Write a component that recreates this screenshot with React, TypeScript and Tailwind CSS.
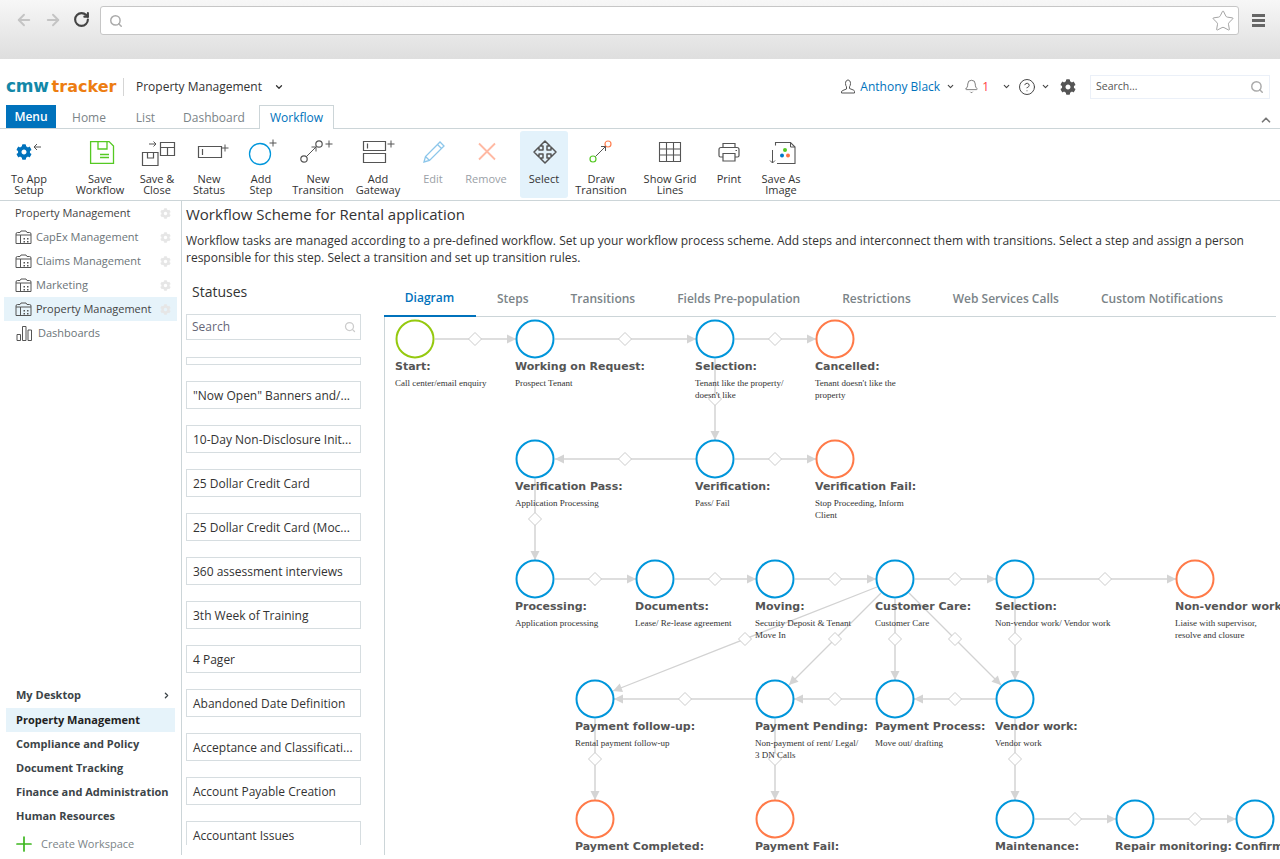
import React from "react";
import { ArrowLeft, ArrowRight, RotateCw, Search, Star, ChevronDown, ChevronRight, ChevronUp, Bell, CircleHelp, Plus } from "lucide-react";
import { FaCog } from "react-icons/fa";

const G = "#555";

function PlusMark({ x, y }: { x: number; y: number }) {
  return <path d={`M${x - 3.5} ${y}h7M${x} ${y - 3.5}v7`} stroke="#555" fill="none" strokeWidth="1" />;
}

function Ico({ children }: { children: React.ReactNode }) {
  return (
    <svg width="48" height="32" viewBox="0 0 48 32" fill="none" stroke={G} strokeWidth="1.2" className="shrink-0">
      {children}
    </svg>
  );
}

const icons: Record<string, React.ReactNode> = {
  setup: (
    <>
      <path d="M29 11h7M32 8l-3 3 3 3" strokeWidth="1" />
    </>
  ),
  save: (
    <g stroke="#55c923" strokeWidth="1.3">
      <path d="M14.6 5.6h18.5l4.4 4.4v17.4H14.6z" />
      <path d="M22 5.6v7.4h9V5.6M24 18.5h9M24 21.5h9" />
    </g>
  ),
  saveclose: (
    <>
      <path d="M9.5 16.5H25v13H9.5z" />
      <path d="M14.5 16.500v5.500h6v-5.500" />
      <path d="M16 8h7M20.500 5.500l2.500 2.500-2.500 2.500" strokeWidth="1" />
      <path d="M27.500 6.500h14v13h-14zM27.500 11.500h14M34.500 11.500v8" />
    </>
  ),
  status: (
    <>
      <path d="M13.500 10.500h23v11h-23zM17.500 13v6" />
      <PlusMark x={40} y={12} />
    </>
  ),
  step: (
    <>
      <circle cx="23" cy="18" r="10.500" stroke="#0096db" strokeWidth="1.300" />
      <PlusMark x={36} y={7} />
    </>
  ),
  transition: (
    <>
      <circle cx="10" cy="23" r="3.200" />
      <circle cx="25" cy="8" r="3.200" />
      <path d="M12.500 20.500l9.500-9.500M17.500 11h4.500v4.500" strokeWidth="1" />
      <PlusMark x={35} y={8} />
    </>
  ),
  gateway: (
    <>
      <path d="M9.500 5.500h22v9h-22zM9.500 17.500h22v9h-22zM13.500 7.500v5" />
      <PlusMark x={37} y={8} />
    </>
  ),
  edit: (
    <g stroke="#8cc6ea" strokeWidth="1.300">
      <path d="M15 26l1.500-5.500L31 6l4 4-14.500 14.500zM16.500 20.500l4 4M28.500 8.500l4 4" />
    </g>
  ),
  remove: (
    <path d="M17 7.500l16 16M33 7.500l-16 16" stroke="#ffb9a3" strokeWidth="1.800" />
  ),
  select: (
    <path d="M25 5l5 5h-3v4h4v-3l5 5-5 5v-3h-4v4h3l-5 5-5-5h3v-4h-4v3l-5-5 5-5v3h4v-4h-3z" strokeWidth="1.500" strokeLinejoin="round" />
  ),
  draw: (
    <>
      <circle cx="16" cy="23" r="3" stroke="#55c923" />
      <circle cx="31" cy="8" r="3" stroke="#ff7f50" />
      <path d="M18.500 20.500l10-10M24 10.500h4.500V15" strokeWidth="1" />
    </>
  ),
  grid: (
    <path d="M13.500 6.500h21v19h-21zM13.500 13h21M13.500 19h21M20.500 6.500v19M27.500 6.500v19" strokeWidth="1.100" />
  ),
  print: (
    <>
      <path d="M18 12V7.500h12V12M18 21h-2.500a1.500 1.500 0 0 1-1.500-1.500v-6a2 2 0 0 1 2-2h16a2 2 0 0 1 2 2v6a1.500 1.500 0 0 1-1.500 1.500H30" />
      <path d="M18 17.500h12v7.500H18z" />
      <path d="M30.500 14.500h1.500" />
    </>
  ),
  image: (
    <>
      <path d="M18.500 9.500V6.500h15l4.500 4.500v16.500H20" strokeWidth="1.100" />
      <path d="M33.500 6.500v4.500h4.500" strokeWidth="1" />
      <path d="M15.500 14v13M13 24.500l2.500 2.500 2.500-2.500" strokeWidth="1" />
      <circle cx="28" cy="14" r="2" fill="#55c923" stroke="none" />
      <circle cx="25" cy="19.500" r="2" fill="#0078c8" stroke="none" />
      <circle cx="31" cy="19.500" r="2" fill="#ff7043" stroke="none" />
    </>
  ),
};

const tools = [
  { k: "setup", t: ["To App", "Setup"], c: "w-[46px] ml-[6px]" },
  { k: "save", t: ["Save", "Workflow"], c: "w-[52px] ml-[22px]" },
  { k: "saveclose", t: ["Save &", "Close"], c: "w-[42px] ml-[10px]" },
  { k: "status", t: ["New", "Status"], c: "w-[38px] ml-[12px]" },
  { k: "step", t: ["Add", "Step"], c: "w-[42px] ml-[12px]" },
  { k: "transition", t: ["New", "Transition"], c: "w-[56px] ml-[8px]" },
  { k: "gateway", t: ["Add", "Gateway"], c: "w-[48px] ml-[8px]" },
  { k: "edit", t: ["Edit"], c: "w-[34px] ml-[14px] text-[#9aa0a6]" },
  { k: "remove", t: ["Remove"], c: "w-[48px] ml-[12px] text-[#9aa0a6]" },
  { k: "select", t: ["Select"], c: "w-[48px] ml-[10px] bg-[#e3f2fb] rounded-[3px]" },
  { k: "draw", t: ["Draw", "Transition"], c: "w-[54px] ml-[6px]" },
  { k: "grid", t: ["Show Grid", "Lines"], c: "w-[60px] ml-[12px]" },
  { k: "print", t: ["Print"], c: "w-[34px] ml-[12px]" },
  { k: "image", t: ["Save As", "Image"], c: "w-[46px] ml-[12px]" },
];

function WorkspaceIcon() {
  return (
    <svg width="17" height="15" viewBox="0 0 17 15" fill="none" stroke="#555" strokeWidth="1" className="shrink-0">
      <path d="M1 13.500V4a1.500 1.500 0 0 1 1.500-1.500H5L6 1h5l1 1.500h2.500A1.500 1.500 0 0 1 16 4v9.500z" />
      <path d="M1 5h4.500v8.500M5.500 5h10.500" />
      <path d="M8.500 8h1.500v1.500H8.500zM12 8h1.500v1.500H12zM8.500 11h1.500v1.500H8.500zM12 11h1.500v1.500H12z" fill="#555" stroke="none" />
    </svg>
  );
}

function GearLite() {
  return <FaCog className="text-[#e6e6e6] text-[11px] shrink-0" />;
}

const statuses = [
  '"Now Open" Banners and/...',
  "10-Day Non-Disclosure Init...",
  "25 Dollar Credit Card",
  "25 Dollar Credit Card (Moc...",
  "360 assessment interviews",
  "3th Week of Training",
  "4 Pager",
  "Abandoned Date Definition",
  "Acceptance and Classificati...",
  "Account Payable Creation",
  "Accountant Issues",
];

const tabs = ["Diagram", "Steps", "Transitions", "Fields Pre-population", "Restrictions", "Web Services Calls", "Custom Notifications"];

type N = { x: number; y: number; c: "b" | "g" | "o"; t: string; d?: string[] };
const nodes: N[] = [
  { x: 415, y: 339, c: "g", t: "Start:", d: ["Call center/email enquiry"] },
  { x: 535, y: 339, c: "b", t: "Working on Request:", d: ["Prospect Tenant"] },
  { x: 715, y: 339, c: "b", t: "Selection:", d: ["Tenant like the property/", "doesn't like"] },
  { x: 835, y: 339, c: "o", t: "Cancelled:", d: ["Tenant doesn't like the", "property"] },
  { x: 535, y: 459, c: "b", t: "Verification Pass:", d: ["Application Processing"] },
  { x: 715, y: 459, c: "b", t: "Verification:", d: ["Pass/ Fail"] },
  { x: 835, y: 459, c: "o", t: "Verification Fail:", d: ["Stop Proceeding, Inform", "Client"] },
  { x: 535, y: 579, c: "b", t: "Processing:", d: ["Application processing"] },
  { x: 655, y: 579, c: "b", t: "Documents:", d: ["Lease/ Re-lease agreement"] },
  { x: 775, y: 579, c: "b", t: "Moving:", d: ["Security Deposit & Tenant", "Move In"] },
  { x: 895, y: 579, c: "b", t: "Customer Care:", d: ["Customer Care"] },
  { x: 1015, y: 579, c: "b", t: "Selection:", d: ["Non-vendor work/ Vendor work"] },
  { x: 1195, y: 579, c: "o", t: "Non-vendor work:", d: ["Liaise with supervisor,", "resolve and closure"] },
  { x: 595, y: 699, c: "b", t: "Payment follow-up:", d: ["Rental payment follow-up"] },
  { x: 775, y: 699, c: "b", t: "Payment Pending:", d: ["Non-payment of rent/ Legal/", "3 DN Calls"] },
  { x: 895, y: 699, c: "b", t: "Payment Process:", d: ["Move out/ drafting"] },
  { x: 1015, y: 699, c: "b", t: "Vendor work:", d: ["Vendor work"] },
  { x: 595, y: 819, c: "o", t: "Payment Completed:" },
  { x: 775, y: 819, c: "o", t: "Payment Fail:" },
  { x: 1015, y: 819, c: "b", t: "Maintenance:" },
  { x: 1135, y: 819, c: "b", t: "Repair monitoring:" },
  { x: 1255, y: 819, c: "b", t: "Confirmation:" },
];

// from, to, diamond; thin = slanted edges
const edges: [number, number, number, number, number, number, number?][] = [
  [435, 339, 516, 339, 475, 339],
  [555, 339, 696, 339, 625, 339],
  [735, 339, 816, 339, 775, 339],
  [715, 359, 715, 440, 715, 399],
  [696, 459, 555, 459, 625, 459],
  [735, 459, 816, 459, 775, 459],
  [535, 479, 535, 560, 535, 519],
  [555, 579, 636, 579, 595, 579],
  [675, 579, 756, 579, 715, 579],
  [795, 579, 876, 579, 835, 579],
  [915, 579, 996, 579, 955, 579],
  [1035, 579, 1176, 579, 1105, 579],
  [877, 587, 613, 691, 745, 639, 1],
  [881, 593, 789, 685, 835, 639, 1],
  [895, 599, 895, 680, 895, 639],
  [909, 593, 1001, 685, 955, 639, 1],
  [1015, 599, 1015, 680, 1015, 639],
  [876, 699, 794, 699, 835, 699],
  [756, 699, 614, 699, 685, 699],
  [996, 699, 914, 699, 955, 699],
  [595, 719, 595, 800, 595, 759],
  [775, 719, 775, 800, 775, 759],
  [1015, 719, 1015, 800, 1015, 759],
  [1035, 819, 1116, 819, 1075, 819],
  [1155, 819, 1236, 819, 1195, 819],
];

function Edge({ e }: { e: (typeof edges)[number] }) {
  const [x1, y1, x2, y2, dx, dy, thin] = e;
  const a = (Math.atan2(y2 - y1, x2 - x1) * 180) / Math.PI;
  return (
    <g>
      <line x1={x1} y1={y1} x2={x2} y2={y2} stroke={thin ? "#d2d2d2" : "#dedede"} strokeWidth={thin ? 1.3 : 2} />
      <path d="M0 0l-9-4.500v9z" fill="#d4d4d4" transform={`translate(${x2} ${y2}) rotate(${a})`} />
      <path d={`M${dx} ${dy - 6.500}l6.500 6.500-6.500 6.500-6.500-6.500z`} fill="#fff" stroke="#cccccc" strokeWidth="1" strokeLinejoin="round" />
    </g>
  );
}

const stroke = { b: "#0096db", g: "#95c90f", o: "#ff7a48" };

function Diagram() {
  return (
    <div className="relative flex-1 overflow-hidden border-l border-[#ccd5d8]">
      <svg width="895" height="538" viewBox="385 317 895 538" className="block">
        {edges.map((e, i) => (
          <Edge key={i} e={e} />
        ))}
        {nodes.map((n, i) => (
          <circle key={i} cx={n.x} cy={n.y} r="18.500" fill="#fff" stroke={stroke[n.c]} strokeWidth="2" />
        ))}
      </svg>
      {nodes.map((n, i) => (
        <div key={i} className="absolute" style={{ left: n.x - 20 - 385, top: n.y + 21 - 317 }}>
          <div className="font-['DejaVu_Sans'] font-bold text-[11px] leading-[14px] text-[#555] whitespace-nowrap">{n.t}</div>
          {n.d && (
            <div className="mt-[3px] font-['Liberation_Serif'] text-[9px] leading-[12px] text-[#333] whitespace-nowrap">
              {n.d.map((l) => (
                <div key={l}>{l}</div>
              ))}
            </div>
          )}
        </div>
      ))}
    </div>
  );
}

export default function App() {
  return (
    <div className="w-[1280px] h-[859px] overflow-hidden bg-white font-['Open_Sans'] text-[#333]">
      {/* browser bar */}
      <div className="h-[59px] bg-gradient-to-b from-[#f7f7f7] to-[#dedede] flex items-start pt-[6px] pl-[15px]">
        <ArrowLeft size={18} strokeWidth={2.500} className="text-[#c4c4c4] mt-[5px] shrink-0" />
        <ArrowRight size={18} strokeWidth={2.500} className="text-[#c4c4c4] mt-[5px] ml-[11px] shrink-0" />
        <RotateCw size={17} strokeWidth={3} className="text-[#444] mt-[5px] ml-[11px] shrink-0" />
        <div className="ml-[10px] w-[1139px] shrink-0 h-[29px] bg-white border border-[#c6c6c6] rounded-[3px] flex items-center justify-between pl-[8px] pr-[3px]">
          <Search size={14} strokeWidth={2.500} className="text-[#aaa]" />
          <Star size={24} strokeWidth={0.900} className="text-[#999]" />
        </div>
        <div className="ml-[13px] mt-[8px] w-[13px] shrink-0 flex flex-col gap-[2px]">
          <div className="h-[3px] bg-[#666]" />
          <div className="h-[3px] bg-[#666]" />
          <div className="h-[3px] bg-[#666]" />
        </div>
      </div>

      {/* app header */}
      <div className="h-[46px] flex items-center pl-[6px] pr-[10px] pt-[9px]">
        <div className="font-['DejaVu_Sans'] font-bold leading-none flex items-baseline gap-[3px] w-[111px] whitespace-nowrap">
          <span className="text-[#1288a8] text-[17px] tracking-[-0.300px]">cmw</span>
          <span className="text-[#ed7d12] text-[16px]">tracker</span>
        </div>
        <div className="ml-[6px] h-[18px] w-px bg-[#d5d5d5]" />
        <div className="ml-[12px] text-[12px]">Property Management</div>
        <ChevronDown size={10} strokeWidth={3} className="ml-[12px] text-[#333]" />
        <div className="flex-1" />
        <svg width="14" height="15" viewBox="0 0 14 15" fill="none" stroke="#555" strokeWidth="1">
          <path d="M4.500 4.500C4.500 2.500 5.500 1 7 1s2.500 1.500 2.500 3.500c0 1.500-.5 2.500-1 3.300v1.700l3.800 1.500c.8.300 1.200.8 1.200 1.500v1.500H.5V13c0-.7.400-1.200 1.200-1.500l3.800-1.500V7.800c-.5-.8-1-1.800-1-3.300z" />
        </svg>
        <span className="ml-[5px] text-[12px] text-[#0072bc]">Anthony Black</span>
        <ChevronDown size={9} strokeWidth={3} className="ml-[6px] text-[#444]" />
        <Bell size={15} strokeWidth={1.200} className="ml-[9px] text-[#555]" />
        <span className="ml-[3px] text-[12px] text-[#f44]">1</span>
        <ChevronDown size={9} strokeWidth={3} className="ml-[13px] text-[#444]" />
        <CircleHelp size={18} strokeWidth={1.300} className="ml-[7px] text-[#444]" />
        <ChevronDown size={9} strokeWidth={3} className="ml-[5px] text-[#444]" />
        <FaCog className="ml-[10px] text-[16px] text-[#555]" />
        <div className="ml-[14px] w-[180px] h-[24px] border border-[#ebf0f8] flex items-center justify-between px-[5px] text-[10.500px] text-[#555]">
          <span>Search...</span>
          <Search size={14} strokeWidth={2.500} className="text-[#aaa]" />
        </div>
      </div>

      {/* tabs */}
      <div className="h-[24px] flex items-end pl-[6px] border-b border-[#ccd5d8] relative text-[12px]">
        <div className="w-[50px] h-[23px] bg-[#0072bc] text-white font-semibold flex items-center justify-center">Menu</div>
        <div className="w-[66px] h-[23px] pt-[2px] text-[#7b8488] flex items-center justify-center">Home</div>
        <div className="w-[47px] h-[23px] pt-[2px] text-[#7b8488] flex items-center justify-center">List</div>
        <div className="w-[90px] h-[23px] pt-[2px] text-[#7b8488] flex items-center justify-center">Dashboard</div>
        <div className="w-[75px] h-[24px] -mb-px pt-[1px] bg-white border border-b-0 border-[#ccd5d8] text-[#0072bc] flex items-center justify-center">Workflow</div>
        <ChevronUp size={14} strokeWidth={3} className="absolute right-[7px] bottom-[1px] text-[#777]" />
      </div>

      {/* toolbar */}
      <div className="h-[72px] flex items-stretch border-b border-[#ccd5d8] pt-[2px] pb-[2px] text-[11px] leading-[11px] text-[#333]">
        {tools.map((t) => (
          <div key={t.k} className={`${t.c} shrink-0 flex flex-col items-center pt-[5px]`}>
            <div className="relative flex justify-center h-[32px] w-[48px] shrink-0">
              {t.k === "setup" && <FaCog className="absolute left-[11px] top-[8px] text-[16px] text-[#0072bc]" />}
              <Ico>{icons[t.k]}</Ico>
            </div>
            <div className="mt-[5px] text-center whitespace-nowrap">
              {t.t.map((l) => (
                <div key={l}>{l}</div>
              ))}
            </div>
          </div>
        ))}
      </div>

      {/* main */}
      <div className="h-[654px] flex">
        {/* sidebar */}
        <div className="w-[182px] shrink-0 border-r border-[#ccd5d8] flex flex-col justify-between text-[11px]">
          <div>
            <div className="h-[24px] mx-[4px] pl-[11px] pr-[6px] flex items-center justify-between text-[#444]">
              <span>Property Management</span>
              <GearLite />
            </div>
            {["CapEx Management", "Claims Management", "Marketing", "Property Management"].map((s, i) => (
              <div key={s} className={i === 3 ? "h-[24px] mx-[4px] w-[173px] pl-[11px] pr-[6px] flex items-center bg-[#e6f3fa] text-[#444]" : "h-[24px] mx-[4px] w-[173px] pl-[11px] pr-[6px] flex items-center text-[#6b7478]"}>
                <WorkspaceIcon />
                <span className="ml-[4px] flex-1">{s}</span>
                <GearLite />
              </div>
            ))}
            <div className="h-[24px] mx-[4px] pl-[12px] flex items-center text-[#6b7478]">
              <svg width="16" height="16" viewBox="0 0 16 16" fill="none" stroke="#555" strokeWidth="1">
                <path d="M1 9.500h3.500v6H1zM6.500 1.500H10v14H6.500zM12 5h3.500v10.500H12z" />
              </svg>
              <span className="ml-[6px]">Dashboards</span>
            </div>
          </div>
          <div className="font-bold text-[#3c4448]">
            <div className="h-[24px] mx-[6px] pl-[10px] pr-[4px] flex items-center justify-between">
              <span>My Desktop</span>
              <ChevronRight size={9} strokeWidth={3.500} />
            </div>
            <div className="h-[24px] mx-[6px] pl-[10px] flex items-center bg-[#e6f3fa] text-[#222] mt-px">Property Management</div>
            <div className="h-[24px] mx-[6px] pl-[10px] flex items-center">Compliance and Policy</div>
            <div className="h-[24px] mx-[6px] pl-[10px] flex items-center">Document Tracking</div>
            <div className="h-[24px] mx-[6px] pl-[10px] flex items-center whitespace-nowrap">Finance and Administration</div>
            <div className="h-[24px] mx-[6px] pl-[10px] flex items-center">Human Resources</div>
            <div className="h-[27px] mx-[6px] pl-[10px] pt-[5px] flex items-center font-normal text-[#7b8488]">
              <Plus size={24} strokeWidth={1.700} className="text-[#3cb61e] -ml-[4px] shrink-0" />
              <span className="ml-[5px]">Create Workspace</span>
            </div>
          </div>
        </div>

        {/* content */}
        <div className="flex-1 min-w-0 pl-[4px] flex flex-col">
          <h1 className="mt-[3px] text-[15px] leading-[20px] text-[#333] font-normal">Workflow Scheme for Rental application</h1>
          <p className="mt-[8px] text-[12px] leading-[17px] w-[1080px] text-[#333]">
            Workflow tasks are managed according to a pre-defined workflow. Set up your workflow process scheme. Add steps and interconnect them with transitions. Select a step and assign a person responsible for this step. Select a transition and set up transition rules.
          </p>
          <div className="mt-[5px] flex flex-1 min-h-0">
            <div className="w-[198px] shrink-0 flex flex-col min-h-0">
              <div className="pl-[6px] pt-[11px] h-[43px] text-[14px] leading-[20px] text-[#333]">Statuses</div>
              <div className="w-[175px] h-[26px] border border-[#d6dde0] flex items-center justify-between pl-[5px] pr-[4px] text-[12px] text-[#667]">
                <span>Search</span>
                <Search size={12} strokeWidth={2.500} className="text-[#ccc]" />
              </div>
              <div className="mt-[5px] h-[500px] overflow-hidden pt-[12px] flex flex-col gap-[16px]">
                <div className="w-[175px] h-[8px] shrink-0 border border-[#d6dde0]" />
                {statuses.map((s) => (
                  <div key={s} className="w-[175px] h-[28px] shrink-0 border border-[#d6dde0] flex items-center pl-[6px] pt-[2px] text-[12px] text-[#333] whitespace-nowrap">
                    {s}
                  </div>
                ))}
              </div>
            </div>
            <div className="flex-1 min-w-0 flex flex-col pt-[10px]">
              <div className="h-[36px] w-[892px] flex items-stretch border-b border-[#ccd5d8] text-[12px] font-semibold text-[#7b8488] shrink-0">
                <div className="w-[92px] pr-[1px] -mb-px flex items-center justify-center border-b-2 border-[#0072bc] text-[#0072bc]">{tabs[0]}</div>
                {tabs.slice(1).map((t) => (
                  <div key={t} className="px-[21px] flex items-center whitespace-nowrap">
                    {t}
                  </div>
                ))}
              </div>
              <Diagram />
            </div>
          </div>
        </div>
      </div>
    </div>
  );
}
